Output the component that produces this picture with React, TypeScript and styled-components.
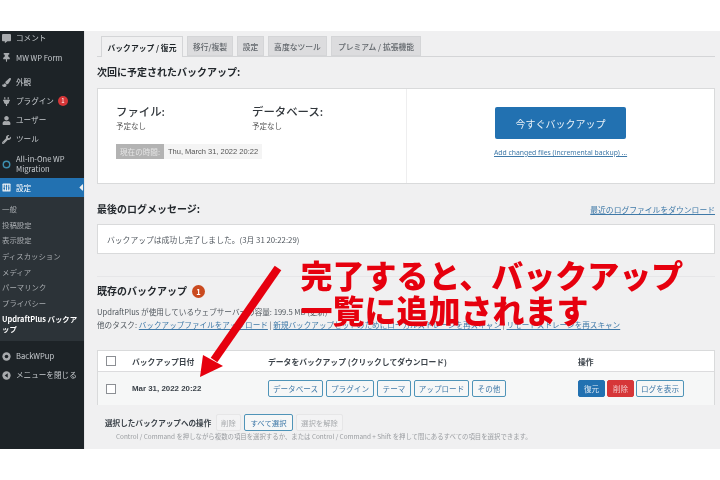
import styled, { createGlobalStyle } from "styled-components";
import { FaCommentAlt, FaThumbtack, FaPaintBrush, FaPlug, FaUser, FaWrench, FaCaretLeft } from "react-icons/fa";

const GlobalStyle = createGlobalStyle`
  html, body { margin: 0; padding: 0; background: #fff; }
  body { font-family: "Noto Sans CJK JP", "Noto Sans", sans-serif; color: #3c434a; }
  a { color: #3f79a8; }
`;

const Page = styled.div`
  position: relative;
  width: 720px;
  height: 480px;
  padding: 31px 0;
  box-sizing: border-box;
  overflow: hidden;
  filter: blur(0.35px);
`;

const Shell = styled.div`
  display: flex;
  height: 418px;
  background: #f0f0f1;
`;

const Sidebar = styled.nav`
  width: 85px;
  flex: none;
  box-sizing: border-box;
  background: #1d2327;
  border-right: 1px solid #e4e4e6;
  font-size: 7.6px;
  color: #c8ccd0;
`;

const MenuRow = styled.div<{ $h?: number; $active?: boolean; $gap?: number }>`
  position: relative;
  display: flex;
  align-items: center;
  gap: 5px;
  height: ${(p) => p.$h ?? 19}px;
  margin-top: ${(p) => p.$gap ?? 0}px;
  padding-left: 2px;
  line-height: 10px;
  white-space: nowrap;
  background: ${(p) => (p.$active ? "#2271b1" : "transparent")};
  color: ${(p) => (p.$active ? "#fff" : "inherit")};
  svg { flex: none; width: 9px; height: 9px; color: #a7aaad; }
`;

const ActiveCaret = styled(FaCaretLeft)`
  position: absolute;
  right: -2px;
  top: 4px;
  && { width: 10px; height: 11px; color: #f0f0f1; }
`;

const Submenu = styled.div`
  background: #2c3338;
  padding: 4px 0 4px 2px;
  font-size: 7.4px;
  color: #a9adb1;
`;

const SubRow = styled.div<{ $current?: boolean }>`
  display: flex;
  align-items: center;
  height: ${(p) => (p.$current ? 25 : 15.7)}px;
  margin-top: ${(p) => (p.$current ? 1 : 0)}px;
  line-height: 10px;
  white-space: nowrap;
  color: ${(p) => (p.$current ? "#fff" : "inherit")};
  font-weight: ${(p) => (p.$current ? 700 : 400)};
`;

const RedCount = styled.span`
  display: inline-flex;
  align-items: center;
  justify-content: center;
  width: 10px;
  height: 10px;
  margin-left: -1px;
  border-radius: 50%;
  background: #d63638;
  color: #fff;
  font-size: 6px;
`;

const Main = styled.main`
  flex: 1;
  min-width: 0;
  padding: 5px 5px 0 12px;
`;

const Tabs = styled.div`
  display: flex;
  gap: 4px;
  height: 20px;
  padding-left: 4px;
  border-bottom: 1px solid #d4d5d7;
`;

const Tab = styled.div<{ $active?: boolean; $w: number }>`
  width: ${(p) => p.$w}px;
  height: ${(p) => (p.$active ? 21 : 20)}px;
  box-sizing: border-box;
  display: flex;
  align-items: center;
  justify-content: center;
  white-space: nowrap;
  border: 1px solid #d4d5d7;
  border-bottom: ${(p) => (p.$active ? "0" : "1px solid #d4d5d7")};
  background: ${(p) => (p.$active ? "#f0f0f1" : "#dcdcde")};
  color: ${(p) => (p.$active ? "#1d2327" : "#62676c")};
  font-size: 7.8px;
  font-weight: ${(p) => (p.$active ? 700 : 500)};
`;

const Heading = styled.h2<{ $top: number }>`
  margin: ${(p) => p.$top}px 0 0;
  font-size: 10px;
  line-height: 14px;
  font-weight: 700;
  color: #23282d;
`;

const Card = styled.div`
  background: #fff;
  border: 1px solid #d9dadb;
  box-sizing: border-box;
`;

const NextCard = styled(Card)`
  display: flex;
  height: 96px;
  margin-top: 9px;
`;

const CardLeft = styled.div`
  width: 309px;
  box-sizing: border-box;
  padding: 13px 0 0 18px;
  border-right: 1px solid #eeeeef;
`;

const Columns = styled.div`
  display: flex;
`;

const Column = styled.div`
  width: 136px;
`;

const BigLabel = styled.div`
  font-size: 11.4px;
  line-height: 18px;
  font-weight: 500;
  color: #32373c;
`;

const SmallNote = styled.div`
  font-size: 7.5px;
  line-height: 12px;
  color: #555;
`;

const Clock = styled.div`
  display: flex;
  margin-top: 12px;
  height: 15px;
  width: 146px;
  font-size: 7.6px;
  line-height: 15px;
  white-space: nowrap;
`;

const ClockLabel = styled.span`
  width: 48px;
  text-align: center;
  background: #b3b3b3;
  color: #e4e4e4;
`;

const ClockValue = styled.span`
  flex: 1;
  padding-left: 4px;
  background: #f4f4f4;
  color: #555;
  font-family: "Liberation Sans", sans-serif;
  font-size: 7.5px;
`;

const CardRight = styled.div`
  flex: 1;
  display: flex;
  flex-direction: column;
  align-items: flex-start;
  padding: 18px 0 0 88px;
`;

const BackupButton = styled.div`
  width: 131px;
  height: 32px;
  display: flex;
  align-items: center;
  justify-content: center;
  background: #2271b1;
  border-radius: 2px;
  color: #e8f0f7;
  font-size: 10px;
`;

const SmallLink = styled.a`
  margin: 8px 0 0 -1px;
  font-size: 6.8px;
  line-height: 11px;
  text-decoration: underline;
  white-space: nowrap;
  font-family: "Noto Sans", sans-serif;
`;

const HeadingRow = styled.div`
  display: flex;
  justify-content: space-between;
  align-items: center;
  margin-top: 18px;
`;

const LogLink = styled.a`
  font-size: 7.8px;
  text-decoration: underline;
`;

const LogCard = styled(Card)`
  height: 30px;
  margin-top: 8px;
  padding-left: 9px;
  display: flex;
  align-items: center;
  font-size: 7.8px;
  color: #50575e;
`;

const Separator = styled.div`
  height: 1px;
  background: #e6e6e8;
  margin-top: 22px;
`;

const ExistingHead = styled.div`
  display: flex;
  align-items: center;
  gap: 5px;
  margin-top: 7px;
`;

const OrangeCount = styled.span`
  display: inline-flex;
  align-items: center;
  justify-content: center;
  width: 13px;
  height: 13px;
  border-radius: 50%;
  background: #ca4a1f;
  color: #fff;
  font-size: 7.5px;
  font-weight: 700;
`;

const InfoLine = styled.div<{ $top: number }>`
  margin-top: ${(p) => p.$top}px;
  font-size: 7.6px;
  line-height: 13px;
  color: #50575e;
  white-space: nowrap;
  a { text-decoration: underline; }
`;

const Table = styled(Card)`
  margin-top: 19px;
  height: 55px;
`;

const TableRow = styled.div<{ $head?: boolean }>`
  display: grid;
  grid-template-columns: 34px 136px 310px 1fr;
  align-items: center;
  height: ${(p) => (p.$head ? 20 : 33)}px;
  background: ${(p) => (p.$head ? "#fff" : "#f6f7f7")};
  border-top: ${(p) => (p.$head ? "0" : "1px solid #dcdcde")};
  font-size: 7.8px;
  font-weight: 700;
  color: #3c434a;
`;

const CheckBox = styled.span`
  width: 8px;
  height: 8px;
  margin-left: 8px;
  background: #fff;
  border: 1px solid #8c8f94;
`;

const DateCell = styled.span`
  font-family: "Liberation Sans", sans-serif;
  font-size: 7.9px;
`;

const ButtonRow = styled.div<{ $gap: number }>`
  display: flex;
  gap: ${(p) => p.$gap}px;
`;

const TableButton = styled.span<{ $w: number; $kind?: "blue" | "red" }>`
  width: ${(p) => p.$w}px;
  height: 17px;
  box-sizing: border-box;
  display: flex;
  align-items: center;
  justify-content: center;
  white-space: nowrap;
  border-radius: 2px;
  font-size: 7.6px;
  font-weight: 400;
  border: 1px solid ${(p) => (p.$kind === "blue" ? "#2271b1" : p.$kind === "red" ? "#d63638" : "#4f94b8")};
  background: ${(p) => (p.$kind === "blue" ? "#2271b1" : p.$kind === "red" ? "#d63638" : "#f6f7f7")};
  color: ${(p) => (p.$kind === "blue" ? "#dbe8f3" : p.$kind === "red" ? "#f3c6c7" : "#3f79a8")};
`;

const BulkRow = styled.div`
  display: flex;
  align-items: center;
  gap: 3px;
  margin: 9px 0 0 8px;
`;

const BulkLabel = styled.span`
  width: 108px;
  font-size: 7.6px;
  font-weight: 700;
  white-space: nowrap;
  color: #3c434a;
`;

const BulkButton = styled.span<{ $w: number; $on?: boolean }>`
  width: ${(p) => p.$w}px;
  height: 17px;
  box-sizing: border-box;
  display: flex;
  align-items: center;
  justify-content: center;
  white-space: nowrap;
  border: 1px solid ${(p) => (p.$on ? "#4f94b8" : "#e6e6e7")};
  border-radius: 2px;
  font-size: 7.4px;
  color: ${(p) => (p.$on ? "#3f79a8" : "#a7aaad")};
  background: ${(p) => (p.$on ? "#f6f7f7" : "#f3f3f4")};
`;

const BulkNote = styled.div`
  margin: 0 0 0 19px;
  font-size: 6.4px;
  line-height: 11px;
  color: #9a9da1;
  white-space: nowrap;
`;

const Annotation = styled.div`
  position: absolute;
  left: 300.5px;
  top: 257px;
  color: #e6000e;
  font-size: 32px;
  line-height: 34.5px;
  font-weight: 900;
  white-space: nowrap;
`;

const Arrow = styled.svg`
  position: absolute;
  left: 190px;
  top: 260px;
`;

export default function App() {
  return (
    <Page>
      <GlobalStyle />
      <Shell>
        <Sidebar>
          <MenuRow $h={14}><FaCommentAlt />コメント</MenuRow>
          <MenuRow $gap={3}><FaThumbtack />MW WP Form</MenuRow>
          <MenuRow $gap={5.5}><FaPaintBrush />外観</MenuRow>
          <MenuRow><FaPlug />プラグイン<RedCount>1</RedCount></MenuRow>
          <MenuRow><FaUser />ユーザー</MenuRow>
          <MenuRow><FaWrench />ツール</MenuRow>
          <MenuRow $h={28} $gap={1.5}>
            <svg viewBox="0 0 10 10">
              <circle cx="5" cy="5" r="3.6" fill="none" stroke="#3d8fb0" strokeWidth="1.6" />
            </svg>
            <span>All-in-One WP<br />Migration</span>
          </MenuRow>
          <MenuRow $active>
            <svg viewBox="0 0 10 10">
              <rect x="0.5" y="0.5" width="9" height="9" rx="1" fill="#e8eef3" />
              <path d="M2.5 2v6M5 2v6M7.5 2v6" stroke="#2271b1" strokeWidth="1" />
              <path d="M1.6 6h1.8M4.1 3.5h1.8M6.6 5.5h1.8" stroke="#2271b1" strokeWidth="1.2" />
            </svg>
            設定
            <ActiveCaret />
          </MenuRow>
          <Submenu>
            <SubRow>一般</SubRow>
            <SubRow>投稿設定</SubRow>
            <SubRow>表示設定</SubRow>
            <SubRow>ディスカッション</SubRow>
            <SubRow>メディア</SubRow>
            <SubRow>パーマリンク</SubRow>
            <SubRow>プライバシー</SubRow>
            <SubRow $current><span>UpdraftPlus バックア<br />ップ</span></SubRow>
          </Submenu>
          <MenuRow $gap={6}>
            <svg viewBox="0 0 10 10">
              <circle cx="5" cy="5" r="4.6" fill="#a7aaad" />
              <circle cx="5" cy="5" r="2" fill="#1d2327" />
            </svg>
            BackWPup
          </MenuRow>
          <MenuRow>
            <svg viewBox="0 0 10 10">
              <circle cx="5" cy="5" r="4.6" fill="#a7aaad" />
              <path d="M6.4 2.6v4.8L3 5z" fill="#1d2327" />
            </svg>
            メニューを閉じる
          </MenuRow>
        </Sidebar>
        <Main>
          <Tabs>
            <Tab $active $w={82}>バックアップ / 復元</Tab>
            <Tab $w={46}>移行/複製</Tab>
            <Tab $w={27}>設定</Tab>
            <Tab $w={59}>高度なツール</Tab>
            <Tab $w={90}>プレミアム / 拡張機能</Tab>
          </Tabs>
          <Heading $top={8}>次回に予定されたバックアップ:</Heading>
          <NextCard>
            <CardLeft>
              <Columns>
                <Column>
                  <BigLabel>ファイル:</BigLabel>
                  <SmallNote>予定なし</SmallNote>
                </Column>
                <Column>
                  <BigLabel>データベース:</BigLabel>
                  <SmallNote>予定なし</SmallNote>
                </Column>
              </Columns>
              <Clock>
                <ClockLabel>現在の時間:</ClockLabel>
                <ClockValue>Thu, March 31, 2022 20:22</ClockValue>
              </Clock>
            </CardLeft>
            <CardRight>
              <BackupButton>今すぐバックアップ</BackupButton>
              <SmallLink>Add changed files (incremental backup) ...</SmallLink>
            </CardRight>
          </NextCard>
          <HeadingRow>
            <Heading $top={0}>最後のログメッセージ:</Heading>
            <LogLink>最近のログファイルをダウンロード</LogLink>
          </HeadingRow>
          <LogCard>バックアップは成功し完了しました。(3月 31 20:22:29)</LogCard>
          <Separator />
          <ExistingHead>
            <Heading $top={0}>既存のバックアップ</Heading>
            <OrangeCount>1</OrangeCount>
          </ExistingHead>
          <InfoLine $top={7}>UpdraftPlus が使用しているウェブサーバーの容量: 199.5 MB (更新)</InfoLine>
          <InfoLine $top={0}>他のタスク: <a>バックアップファイルをアップロード</a> | <a>新規バックアップセットのためにローカルストレージを再スキャン</a> | <a>リモートストレージを再スキャン</a></InfoLine>
          <Table>
            <TableRow $head>
              <CheckBox />
              <span>バックアップ日付</span>
              <span>データをバックアップ (クリックしてダウンロード)</span>
              <span>操作</span>
            </TableRow>
            <TableRow>
              <CheckBox />
              <DateCell>Mar 31, 2022 20:22</DateCell>
              <ButtonRow $gap={3}>
                <TableButton $w={55}>データベース</TableButton>
                <TableButton $w={48}>プラグイン</TableButton>
                <TableButton $w={34}>テーマ</TableButton>
                <TableButton $w={55}>アップロード</TableButton>
                <TableButton $w={34}>その他</TableButton>
              </ButtonRow>
              <ButtonRow $gap={2}>
                <TableButton $w={27} $kind="blue">復元</TableButton>
                <TableButton $w={27} $kind="red">削除</TableButton>
                <TableButton $w={48}>ログを表示</TableButton>
              </ButtonRow>
            </TableRow>
          </Table>
          <BulkRow>
            <BulkLabel>選択したバックアップへの操作</BulkLabel>
            <BulkButton $w={25}>削除</BulkButton>
            <BulkButton $w={49} $on>すべて選択</BulkButton>
            <BulkButton $w={47}>選択を解除</BulkButton>
          </BulkRow>
          <BulkNote>Control / Command を押しながら複数の項目を選択するか、または Control / Command + Shift を押して間にあるすべての項目を選択できます。</BulkNote>
        </Main>
      </Shell>
      <Arrow width="100" height="125" viewBox="0 0 100 125">
        <path d="M88 8 L24 100" stroke="#e6000e" strokeWidth="8" fill="none" />
        <path d="M10 117 L13 95 L33 106 Z" fill="#e6000e" />
      </Arrow>
      <Annotation>
        完了すると、バックアップ
        <br />
        一覧に追加されます
      </Annotation>
    </Page>
  );
}
